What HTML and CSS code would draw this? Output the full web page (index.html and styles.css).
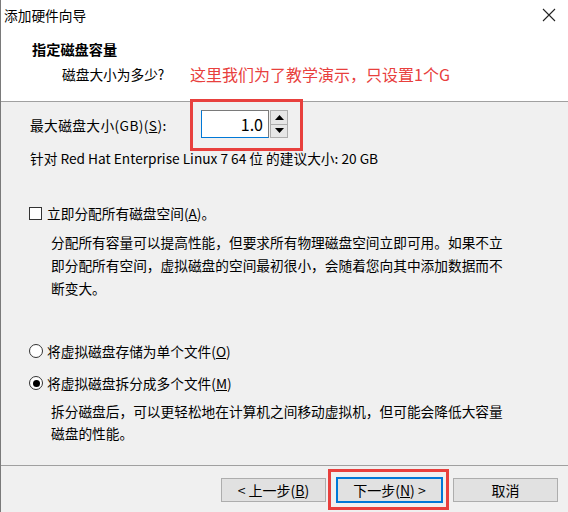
FILE: index.html
```html
<!DOCTYPE html>
<html lang="zh-CN">
<head>
<meta charset="utf-8">
<title>添加硬件向导</title>
<link rel="stylesheet" href="styles.css">
</head>
<body>
<div class="window">
  <div class="top">
    <div class="titlebar">
      <span class="title">添加硬件向导</span>
      <svg class="close" width="14" height="14" viewBox="0 0 14 14"><path d="M1 1 L13 13 M13 1 L1 13" stroke="#222" stroke-width="1.1" fill="none"/></svg>
    </div>
    <div class="heading">指定磁盘容量</div>
    <div class="subrow">
      <span class="sub">磁盘大小为多少?</span>
      <span class="note">这里我们为了教学演示，只设置1个G</span>
    </div>
  </div>
  <div class="content">
    <div class="sizerow">
      <span class="label">最大磁盘大小(GB)(<u>S</u>):</span>
      <div class="spin">
        <div class="input">1.0</div>
        <div class="arrows">
          <div class="arr"><svg width="9" height="5" viewBox="0 0 9 5"><path d="M0 5 L4.5 0 L9 5 Z" fill="#000"/></svg></div>
          <div class="arr"><svg width="9" height="5" viewBox="0 0 9 5"><path d="M0 0 L4.5 5 L9 0 Z" fill="#000"/></svg></div>
        </div>
        <div class="mark mark-input"></div>
      </div>
    </div>
    <div class="hint">针对 Red Hat Enterprise Linux 7 64 位 的建议大小: 20 GB</div>
    <div class="check">
      <span class="box"></span>
      <span>立即分配所有磁盘空间(<u>A</u>)。</span>
    </div>
    <p class="desc desc1"><span class="ln">分配所有容量可以提高性能，但要求所有物理磁盘空间立即可用。如果不立</span><span class="ln">即分配所有空间，虚拟磁盘的空间最初很小，会随着您向其中添加数据而不</span><span class="ln">断变大。</span></p>
    <div class="radio r1">
      <span class="dot"></span>
      <span>将虚拟磁盘存储为单个文件(<u>O</u>)</span>
    </div>
    <div class="radio r2">
      <span class="dot on"></span>
      <span>将虚拟磁盘拆分成多个文件(<u>M</u>)</span>
    </div>
    <p class="desc desc2"><span class="ln">拆分磁盘后，可以更轻松地在计算机之间移动虚拟机，但可能会降低大容量</span><span class="ln">磁盘的性能。</span></p>
  </div>
  <div class="footer">
    <button class="btn">&lt; 上一步(<u>B</u>)</button>
    <button class="btn primary">下一步(<u>N</u>) &gt;<span class="mark mark-btn"></span></button>
    <button class="btn">取消</button>
  </div>
</div>
</body>
</html>
```

FILE: styles.css
```css
html, body {
  margin: 0;
  padding: 0;
}
body {
  font-family: "Noto Sans CJK SC", "Noto Sans", sans-serif;
  font-size: 13.7px;
  color: #000;
  background: #f0f0f0;
}
.window {
  width: 567px;
  height: 512px;
  border-left: 1px solid #7a7a7a;
  display: flex;
  flex-direction: column;
  background: #f0f0f0;
}
.top {
  background: #fff;
  height: 101px;
  border-bottom: 1px solid #a0a0a0;
  flex: none;
}
.titlebar {
  height: 29px;
  display: flex;
  align-items: center;
  justify-content: space-between;
  padding: 0 12px 0 3px;
}
.title {
  line-height: 20px;
}
.close {
  display: block;
  margin-top: 1px;
}
.heading {
  margin: 10px 0 0 31px;
  font-weight: bold;
  font-size: 14.2px;
  line-height: 20px;
}
.subrow {
  display: flex;
  align-items: center;
  margin-top: 4px;
  line-height: 22px;
}
.sub {
  margin-left: 61px;
  width: 128px;
}
.note {
  color: #e8403d;
  font-size: 16px;
  line-height: 22px;
}
.content {
  flex: 1;
  padding: 8px 0 0 29px;
}
.sizerow {
  display: flex;
  align-items: center;
  height: 28px;
}
.label {
  width: 171px;
  line-height: 20px;
  padding-top: 2px;
  letter-spacing: 0.4px;
}
.spin {
  position: relative;
  display: flex;
  height: 28px;
}
.input {
  width: 61px;
  height: 26px;
  background: #fff;
  border: 1px solid #7a7a7a;
  border-left-color: #0078d7;
  border-bottom-color: #0078d7;
  text-align: right;
  padding-right: 5px;
  line-height: 26px;
  font-size: 16px;
}
.arrows {
  display: flex;
  flex-direction: column;
  margin-left: 1px;
}
.arr {
  width: 16px;
  height: 13px;
  background: #e6e6e6;
  border: 1px solid #adadad;
  display: flex;
  align-items: center;
  justify-content: center;
}
.arr + .arr {
  border-top: none;
}
.mark {
  position: absolute;
  border: 3px solid #e8403d;
  pointer-events: none;
}
.mark-input {
  left: -11px;
  top: -11px;
  width: 107px;
  height: 46px;
}
.hint {
  margin-top: 10px;
  line-height: 20px;
}
.check, .radio {
  display: flex;
  align-items: center;
  line-height: 20px;
  gap: 4px;
  margin-left: -1px;
}
.check {
  margin-top: 35px;
}
.box {
  width: 11px;
  height: 11px;
  border: 1px solid #333;
  background: #fff;
  margin-right: 1px;
}
.desc {
  margin: 8px 0 0 21px;
  line-height: 23px;
}
.ln {
  display: block;
  white-space: nowrap;
}
.desc2 {
  margin-top: 7px;
  line-height: 22px;
}
.r1 {
  margin-top: 41px;
}
.r2 {
  margin-top: 12px;
}
.dot {
  width: 12px;
  height: 12px;
  border: 1px solid #333;
  border-radius: 50%;
  background: #fff;
  position: relative;
}
.dot.on::after {
  content: "";
  position: absolute;
  left: 2.5px;
  top: 2.5px;
  width: 7px;
  height: 7px;
  border-radius: 50%;
  background: #000;
}
.footer {
  flex: none;
  height: 47px;
  border-top: 1px solid #a0a0a0;
  display: flex;
  justify-content: flex-end;
  align-items: flex-start;
  gap: 10px;
  padding: 12px 10px 0 0;
  box-sizing: border-box;
}
.btn {
  position: relative;
  width: 105px;
  height: 24px;
  background: #e1e1e1;
  border: 1px solid #adadad;
  font-family: inherit;
  font-size: 14px;
  color: #000;
  padding: 0;
  line-height: 20px;
}
.btn.primary {
  width: 107px;
  height: 26px;
  margin-top: -1px;
  border: 2px solid #0078d7;
}
.mark-btn {
  left: -10px;
  top: -10px;
  width: 115px;
  height: 35px;
}
```
